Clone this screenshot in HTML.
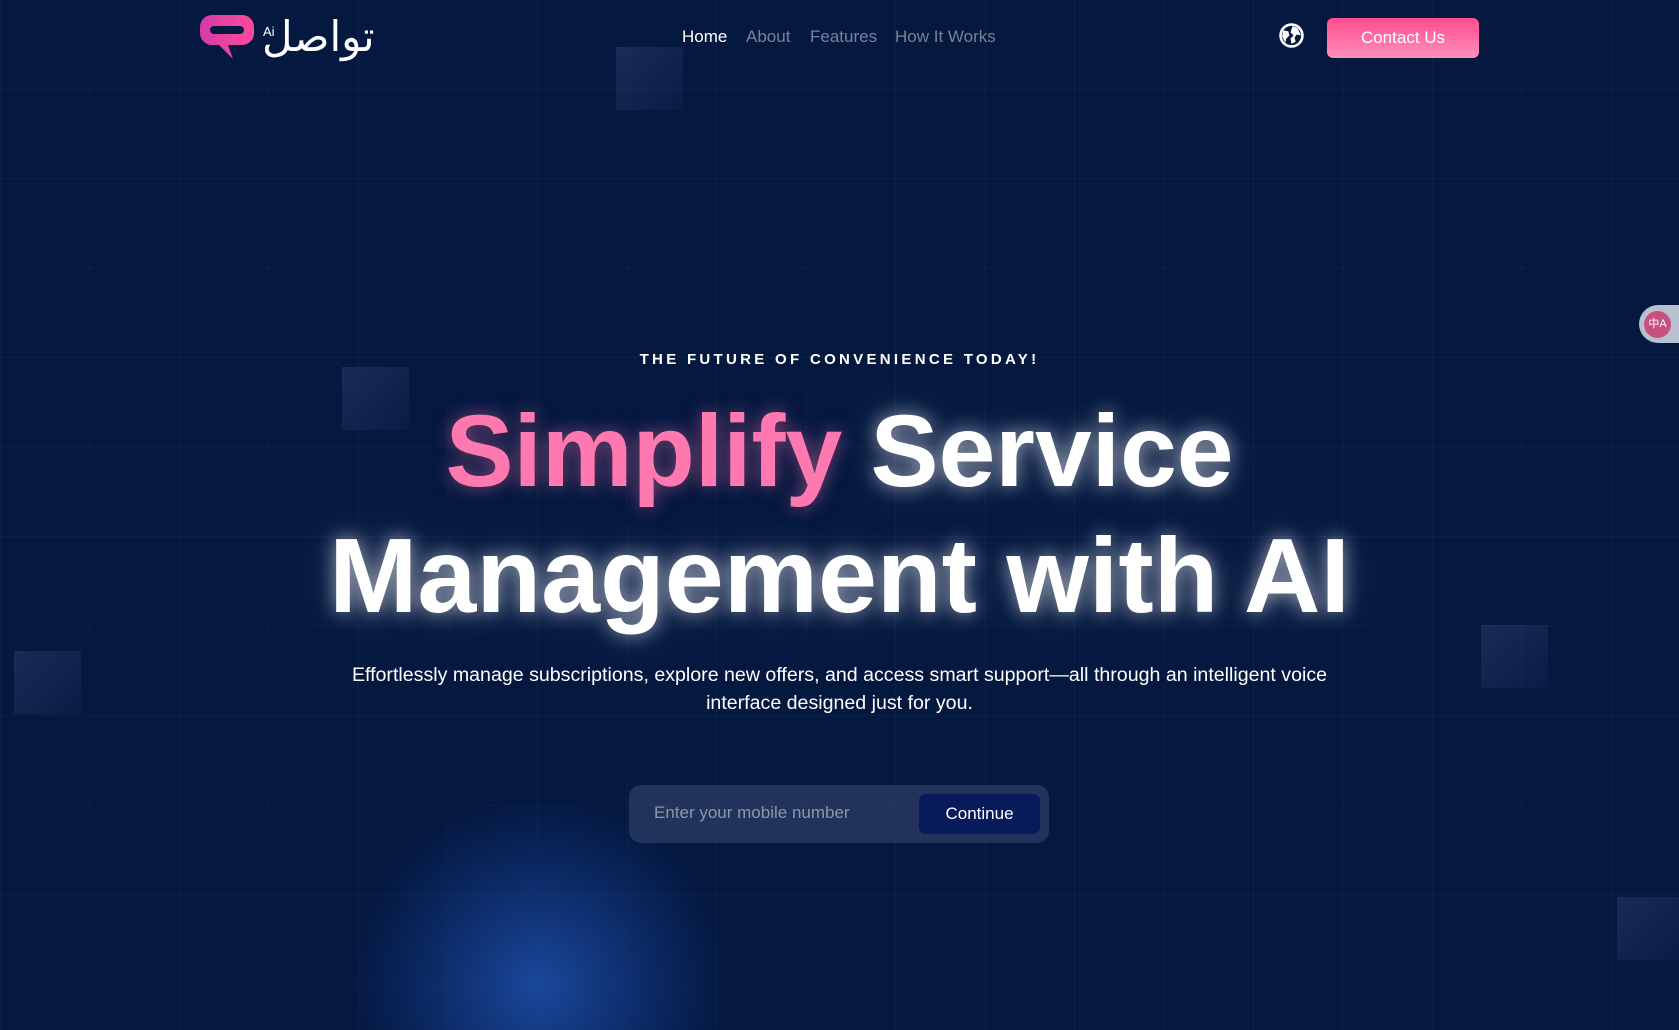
<!DOCTYPE html>
<html><head><meta charset="utf-8"><style>
*{margin:0;padding:0;box-sizing:border-box}
html,body{width:1679px;height:1030px;overflow:hidden}
body{background:#041840;font-family:"Liberation Sans",sans-serif;position:relative;color:#fff}
.wrap{position:absolute;left:0;top:0;width:1679px;height:1030px;overflow:hidden}
.grid{position:absolute;inset:0;background-image:linear-gradient(90deg,rgba(255,255,255,0.03) 1px,transparent 1px),linear-gradient(0deg,rgba(255,255,255,0.03) 1px,transparent 1px);background-size:89.5px 89.5px}
.glow{position:absolute;left:349px;top:795px;width:380px;height:380px;border-radius:50%;background:radial-gradient(circle,rgba(30,80,170,0.85) 0%,rgba(20,60,140,0.5) 40%,rgba(4,24,64,0) 70%)}
.sq{position:absolute;width:67px;height:63px;background:linear-gradient(135deg,rgba(70,90,140,0.3),rgba(40,60,110,0.12))}
.a{position:absolute;white-space:nowrap}
.nav a{position:absolute;top:27px;font-size:17px;color:#7a8196;text-decoration:none}
.btn{position:absolute;left:1327px;top:18px;width:152px;height:40px;border-radius:6px;background:linear-gradient(180deg,#ff4c8d,#ff8fbc);font-size:17px;text-align:center;line-height:40px}
h1{position:absolute;left:0;width:1679px;text-align:center;font-size:102px;font-weight:bold;text-shadow:0 0 18px rgba(255,255,255,0.55),0 0 40px rgba(255,255,255,0.25)}
.pink{color:#ff79b0;text-shadow:0 0 18px rgba(255,120,170,0.5)}
</style></head><body><div class="wrap">
<div class="grid"></div>
<div class="glow"></div>
<div class="sq" style="left:616px;top:47px"></div>
<div class="sq" style="left:342px;top:367px"></div>
<div class="sq" style="left:14px;top:651px"></div>
<div class="sq" style="left:1481px;top:625px"></div>
<div class="sq" style="left:1617px;top:897px;width:62px"></div>

<svg class="a" style="left:198px;top:13px" width="58" height="50" viewBox="0 0 58 50">
<defs><linearGradient id="g" x1="0" x2="1"><stop offset="0" stop-color="#d53aa8"/><stop offset="1" stop-color="#ff4a9a"/></linearGradient></defs>
<path d="M14 2h30a12 12 0 0 1 12 12v6a12 12 0 0 1-12 12H30l5 14-14-14h-7A12 12 0 0 1 2 20v-6A12 12 0 0 1 14 2z" fill="url(#g)"/>
<rect x="12" y="13" width="34" height="8" rx="4" fill="#041840"/>
</svg>
<div class="a" style="left:263px;top:24px;font-size:13px">Ai</div>
<div class="a" style="left:262px;top:12px;font-size:42px;font-family:'DejaVu Sans',sans-serif;direction:rtl">تواصل</div>

<div class="nav">
<a style="left:682px;color:#fff">Home</a>
<a style="left:746px">About</a>
<a style="left:810px">Features</a>
<a style="left:895px">How It Works</a>
</div>
<svg class="a" style="left:1279px;top:23px" width="25" height="25" viewBox="0 0 24 24"><circle cx="12" cy="12" r="10.5" fill="none" stroke="#fff" stroke-width="2.5"/><path d="M4 7l5 1 1 4-3 3-1 4-3-6zM13 3l5 2 3 7-4-1-2 3 1 4-4 2-1-5 3-3-3-3z" fill="#fff"/></svg>
<div class="btn">Contact Us</div>

<div class="a" style="left:1639px;top:305px;width:50px;height:38px;border-radius:19px 0 0 19px;background:#b8c0d0"></div>
<div class="a" style="left:1644px;top:311px;width:27px;height:27px;border-radius:50%;background:#c8507f;font-size:11px;text-align:center;line-height:27px">中A</div>

<div class="a" style="left:0;width:1679px;text-align:center;top:351px;font-size:15px;font-weight:bold;letter-spacing:3.3px">THE FUTURE OF CONVENIENCE TODAY!</div>
<h1 style="top:393px"><span class="pink">Simplify</span> Service</h1>
<h1 style="top:516px;font-size:106px">Management with AI</h1>
<div class="a" style="left:0;width:1679px;text-align:center;top:661px;font-size:19.6px;line-height:28px;white-space:normal">Effortlessly manage subscriptions, explore new offers, and access smart support—all through an intelligent voice<br>interface designed just for you.</div>

<div class="a" style="left:629px;top:785px;width:420px;height:58px;border-radius:12px;background:rgba(70,85,125,0.45)"></div>
<div class="a" style="left:654px;top:803px;font-size:17px;color:#8e96a8">Enter your mobile number</div>
<div class="a" style="left:919px;top:794px;width:121px;height:40px;border-radius:7px;background:#071a5a;font-size:17px;text-align:center;line-height:40px">Continue</div>
</div></body></html>
